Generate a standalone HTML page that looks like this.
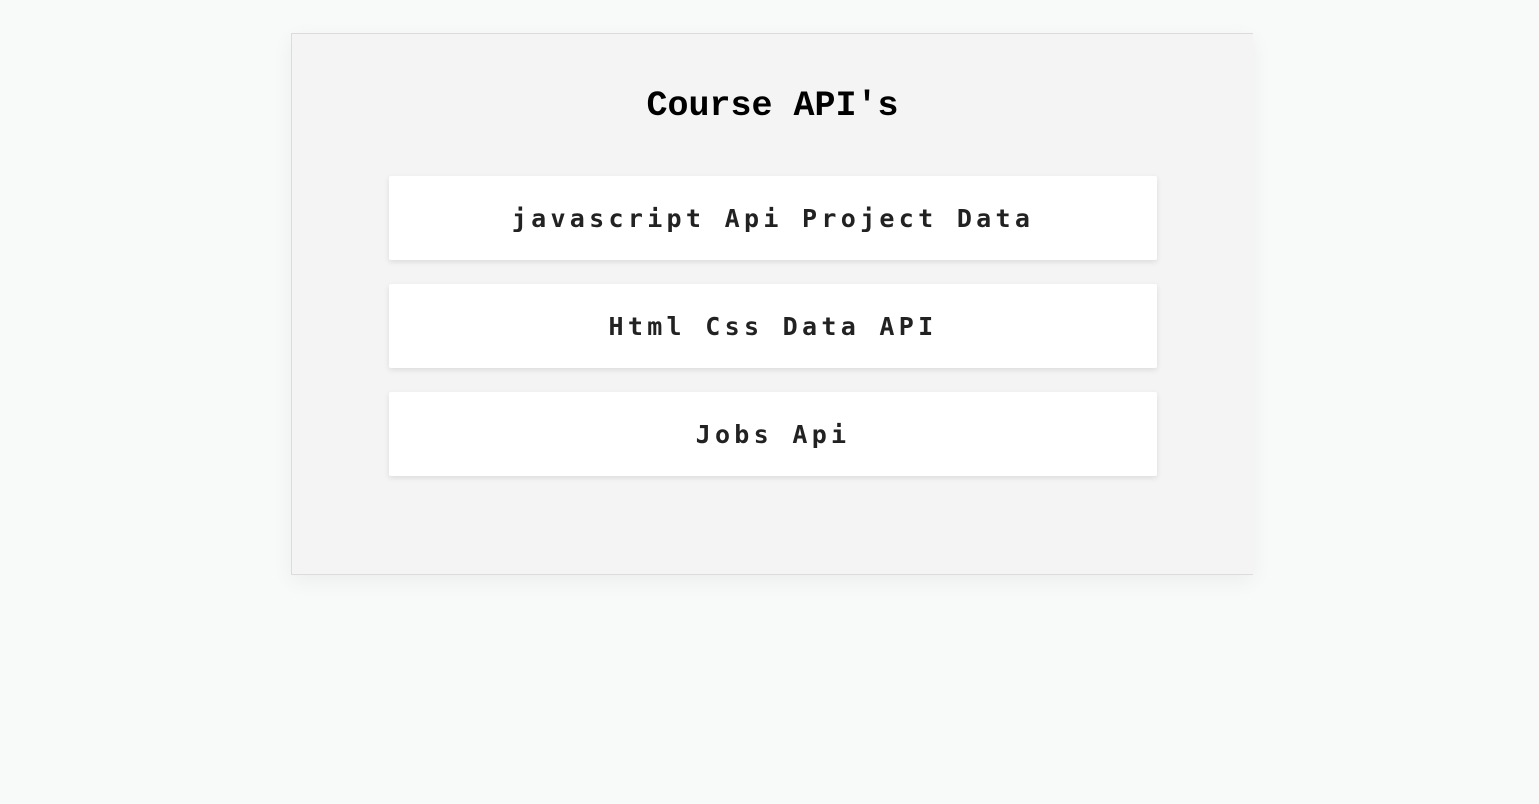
<!DOCTYPE html>
<html><head><style>
html,body{margin:0;padding:0;}
body{width:1539px;height:804px;background:#f8f9f9;font-family:"Liberation Mono","DejaVu Sans Mono",monospace;position:relative;overflow:hidden;}
.card{position:absolute;left:291px;top:33px;width:961px;height:540px;border:1px solid #dcdcdc;border-right:none;background:#f4f4f4;box-shadow:0 6px 20px rgba(0,0,0,0.05);}
h1{position:absolute;left:0;right:0;margin:0;text-align:center;font-size:35px;line-height:44px;font-weight:bold;color:#000;}
.btn{position:absolute;left:97px;width:768px;height:84px;background:#fff;border-radius:2px;box-shadow:0 2px 6px rgba(0,0,0,0.1);text-align:center;line-height:86px;font-family:"DejaVu Sans Mono",monospace;font-size:25px;font-weight:bold;letter-spacing:4.3px;color:#222;}
</style></head><body>
<div class="card">
<h1 style="top:50px">Course API's</h1>
<div class="btn" style="top:142px">javascript Api Project Data</div>
<div class="btn" style="top:250px">Html Css Data API</div>
<div class="btn" style="top:358px">Jobs Api</div>
</div>
</body></html>
